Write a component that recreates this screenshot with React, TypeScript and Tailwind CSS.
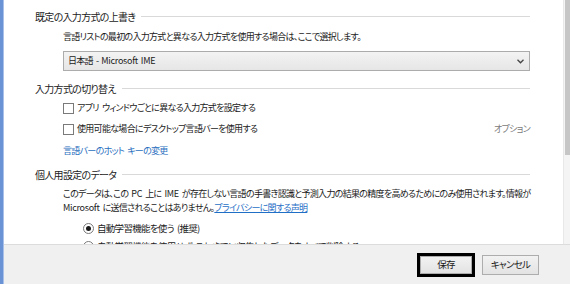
import React from "react";

const font = "font-['Noto_Sans_CJK_JP','Noto_Sans',sans-serif] [font-feature-settings:'palt'] tracking-[-0.7px]";

function Sp() {
  return <span className="inline-block w-[3px]" />;
}

function Lat({ children }: { children: React.ReactNode }) {
  return <span className="tracking-[-0.3px]">{children}</span>;
}

function Heading({ children }: { children: React.ReactNode }) {
  return (
    <div className="flex h-[14px] items-center gap-[6px] text-[10px] text-[#222]">
      <span className="whitespace-nowrap">{children}</span>
      <div className="h-px flex-1 bg-[#d9d9d9]" />
    </div>
  );
}

function Checkbox({ children }: { children: React.ReactNode }) {
  return (
    <div className="flex h-[14px] items-center gap-[3px]">
      <div className="h-[11px] w-[11px] shrink-0 border border-[#7a7a7a] bg-white" />
      <span className="whitespace-nowrap">{children}</span>
    </div>
  );
}

function Radio({ children, checked }: { children: React.ReactNode; checked?: boolean }) {
  return (
    <div className="flex h-[14px] items-center gap-[3px] pl-[20px] text-[9.5px]">
      <div className="flex h-[11px] w-[11px] shrink-0 items-center justify-center rounded-full border border-[#7a7a7a] bg-white">
        {checked && <div className="h-[5px] w-[5px] rounded-full bg-[#1a1a1a]" />}
      </div>
      <span className="whitespace-nowrap">{children}</span>
    </div>
  );
}

export default function App() {
  return (
    <div className={`flex h-[284px] w-[570px] overflow-hidden bg-white ${font}`}>
      <div className="w-[3px] shrink-0 bg-[#6a93d6]" />
      <div className="w-px shrink-0 bg-[#a9c0e8]" />
      <div className="flex min-w-0 flex-1 flex-col">
        <div className="flex h-[244px] overflow-hidden">
          <div className="min-w-0 flex-1 overflow-hidden pl-[31px] pr-[33px] pt-[9px] text-[9px] text-[#1a1a1a]">
            <Heading>既定の入力方式の上書き</Heading>
            <div className="pl-[28px]">
              <div className="mt-[7px] flex h-[14px] items-center whitespace-nowrap">
                言語リストの最初の入力方式と異なる入力方式を使用する場合は、ここで選択します。
              </div>
              <div className="mt-[7px] flex h-[20px] items-center justify-between border border-[#acacac] bg-gradient-to-b from-[#f3f3f3] to-[#e6e6e6] pl-[4px] pr-[5px]">
                <span className="whitespace-nowrap">
                  日本語<Sp />-<Sp /><Lat>Microsoft</Lat><Sp /><Lat>IME</Lat>
                </span>
                <svg width="7" height="5" viewBox="0 0 7 5">
                  <path d="M0.5 0.8 L3.5 3.8 L6.5 0.8" fill="none" stroke="#444" strokeWidth="1.3" />
                </svg>
              </div>
            </div>
            <div className="mt-[10px]">
              <Heading>入力方式の切り替え</Heading>
            </div>
            <div className="pl-[28px]">
              <div className="mt-[6px]">
                <Checkbox>
                  アプリ<Sp />ウィンドウごとに異なる入力方式を設定する
                </Checkbox>
              </div>
              <div className="mt-[7px] flex items-center justify-between">
                <Checkbox>使用可能な場合にデスクトップ言語バーを使用する</Checkbox>
                <span className="whitespace-nowrap text-[#7a7a7a]">オプション</span>
              </div>
              <div className="mt-[8px] flex h-[14px] items-center whitespace-nowrap text-[#2a6fc0]">
                言語バーのホット<Sp />キーの変更
              </div>
            </div>
            <div className="mt-[9px]">
              <Heading>個人用設定のデータ</Heading>
            </div>
            <div className="pl-[28px]">
              <div className="mt-[6px] whitespace-nowrap leading-[14px]">
                このデータは、この<Sp /><Lat>PC</Lat><Sp />上に<Sp /><Lat>IME</Lat><Sp />が存在しない言語の手書き認識と予測入力の結果の精度を高めるためにのみ使用されます。情報が
                <br />
                <Lat>Microsoft</Lat><Sp />に送信されることはありません。
                <span className="text-[#1f6fc6] underline">プライバシーに関する声明</span>
              </div>
              <div className="mt-[6px]">
                <Radio checked>
                  自動学習機能を使う<Sp />(推奨)
                </Radio>
              </div>
              <div className="mt-[4px]">
                <Radio>自動学習機能を使用せず、これまでに収集したデータをすべて削除する</Radio>
              </div>
            </div>
          </div>
          <div className="flex w-[7px] shrink-0 justify-end border-l border-[#e8e8e8] bg-[#f4f4f4]">
            <div className="h-[155px] w-[5px] bg-[#c6c6c6]" />
          </div>
        </div>
        <div className="flex h-[40px] items-center justify-end gap-[7px] border-t border-[#dcdcdc] bg-[#f0f0f0] pr-[31px] text-[9.5px] text-[#1a1a1a]">
          <div className="border-[3px] border-black">
            <div className="flex h-[18px] w-[52px] items-center justify-center border border-[#adadad] bg-gradient-to-b from-[#f2f2f2] to-[#e3e3e3]">
              保存
            </div>
          </div>
          <div className="flex h-[20px] w-[57px] items-center justify-center border border-[#adadad] bg-gradient-to-b from-[#f2f2f2] to-[#e3e3e3]">
            キャンセル
          </div>
        </div>
      </div>
    </div>
  );
}
